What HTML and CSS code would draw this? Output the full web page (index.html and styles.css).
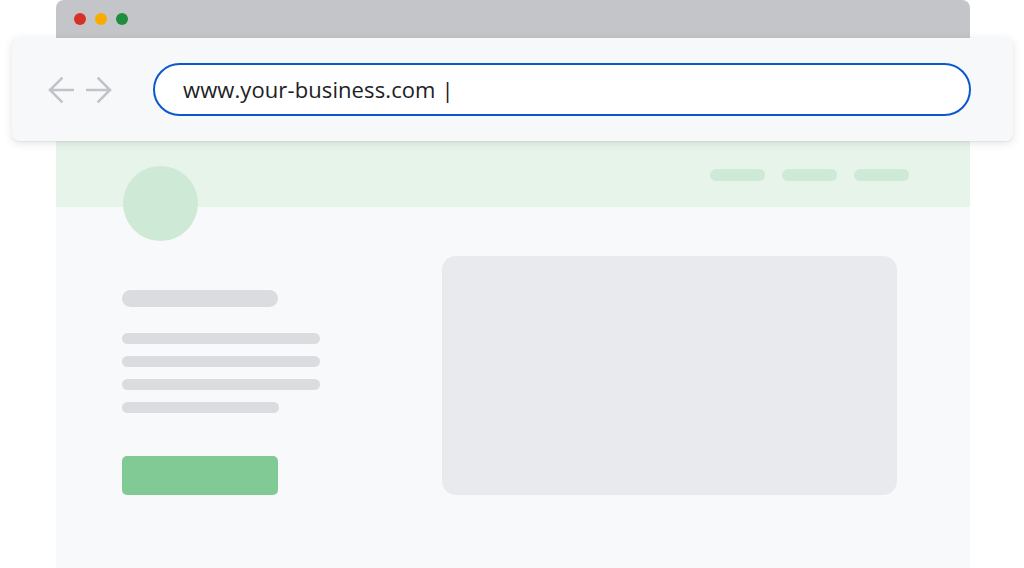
FILE: index.html
```html
<!DOCTYPE html>
<html lang="en">
<head>
<meta charset="utf-8">
<title>Your business website</title>
<link rel="stylesheet" href="styles.css">
</head>
<body>
<div class="window">
  <div class="titlebar">
    <span class="dot red"></span>
    <span class="dot yellow"></span>
    <span class="dot green"></span>
  </div>
  <div class="toolbar">
    <div class="nav-arrows">
      <svg class="arrow" width="26" height="26" viewBox="0 0 26 26" aria-hidden="true">
        <path d="M25 13H2M13.5 1.5L2 13l11.5 11.5" fill="none" stroke="#c0c3c8" stroke-width="2.5" stroke-linecap="square"/>
      </svg>
      <svg class="arrow" width="26" height="26" viewBox="0 0 26 26" aria-hidden="true">
        <path d="M1 13h23M12.5 1.5L24 13 12.5 24.5" fill="none" stroke="#c0c3c8" stroke-width="2.5" stroke-linecap="square"/>
      </svg>
    </div>
    <div class="urlbar">
      <span class="url">www.your-business.com |</span>
    </div>
  </div>
  <div class="site-header">
    <div class="logo"></div>
    <nav class="site-nav">
      <span class="pill"></span>
      <span class="pill"></span>
      <span class="pill"></span>
    </nav>
  </div>
  <div class="site-main">
    <div class="text-col">
      <div class="sk-title"></div>
      <div class="sk-lines">
        <div class="sk-line"></div>
        <div class="sk-line"></div>
        <div class="sk-line"></div>
        <div class="sk-line short"></div>
      </div>
      <div class="sk-button"></div>
    </div>
    <div class="sk-image"></div>
  </div>
</div>
</body>
</html>
```

FILE: styles.css
```css
html, body {
  margin: 0;
  padding: 0;
  background: #ffffff;
  height: 568px;
  overflow: hidden;
}

.window {
  margin-left: 56px;
  width: 914px;
  height: 568px;
  background: #f8f9fa;
  border-radius: 8px 8px 0 0;
  display: flex;
  flex-direction: column;
}

.titlebar {
  height: 38px;
  flex: none;
  background: #c4c5c8;
  border-radius: 8px 8px 0 0;
  display: flex;
  align-items: center;
  gap: 9px;
  padding-left: 18px;
  box-sizing: border-box;
}

.dot {
  width: 12px;
  height: 12px;
  border-radius: 50%;
  display: block;
}
.dot.red { background: #d93025; }
.dot.yellow { background: #f9ab00; }
.dot.green { background: #1e8e3e; }

.toolbar {
  position: relative;
  z-index: 2;
  flex: none;
  height: 103px;
  margin: 0 -43px 0 -44px;
  background: #f7f8fa;
  border-radius: 7px;
  box-shadow: 0 2px 8px rgba(60, 64, 67, 0.14), 0 1px 2px rgba(60, 64, 67, 0.06);
  display: flex;
  align-items: center;
  padding: 0 42px 0 36px;
  box-sizing: border-box;
}

.nav-arrows {
  display: flex;
  gap: 12px;
  margin-right: 41px;
}

.arrow {
  display: block;
}

.urlbar {
  flex: 1;
  height: 53px;
  box-sizing: border-box;
  border: 2px solid #0b57d0;
  border-radius: 27px;
  background: #ffffff;
  display: flex;
  align-items: center;
  padding-left: 28px;
}

.url {
  font-family: "Open Sans", "DejaVu Sans", sans-serif;
  font-size: 22px;
  color: #202124;
  letter-spacing: 0.1px;
  padding-bottom: 1px;
}

.site-header {
  flex: none;
  height: 66px;
  background: #e6f4ea;
  display: flex;
  justify-content: space-between;
  align-items: flex-start;
  padding: 25px 61px 0 67px;
  box-sizing: border-box;
}

.logo {
  width: 75px;
  height: 75px;
  border-radius: 50%;
  background: #ceead6;
  flex: none;
}

.site-nav {
  display: flex;
  gap: 17px;
  margin-top: 3px;
}

.pill {
  display: block;
  width: 55px;
  height: 12px;
  border-radius: 6px;
  background: #ceead6;
}

.site-main {
  display: flex;
  align-items: flex-start;
  padding: 49px 0 0 66px;
  gap: 122px;
}

.text-col {
  width: 198px;
  padding-top: 34px;
  display: flex;
  flex-direction: column;
}

.sk-title {
  width: 156px;
  height: 17px;
  border-radius: 9px;
  background: #dadce0;
}

.sk-lines {
  margin-top: 26px;
  display: flex;
  flex-direction: column;
  gap: 12px;
}

.sk-line {
  width: 198px;
  height: 11px;
  border-radius: 6px;
  background: #dadce0;
}

.sk-line.short {
  width: 157px;
}

.sk-button {
  margin-top: 43px;
  width: 156px;
  height: 39px;
  border-radius: 5px;
  background: #81c995;
}

.sk-image {
  width: 455px;
  height: 239px;
  border-radius: 14px;
  background: #e8eaed;
}
```
